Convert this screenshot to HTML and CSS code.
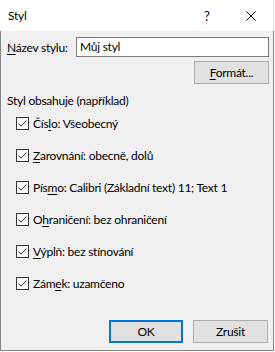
FILE: index.html
```html
<!DOCTYPE html>
<html lang="cs">
<head>
<meta charset="utf-8">
<title>Styl</title>
<link rel="stylesheet" href="styles.css">
</head>
<body>
<div class="dialog">
  <div class="titlebar">
    <span class="title">Styl</span>
    <span class="help">?</span>
    <span class="close">
      <svg width="10" height="10" viewBox="0 0 10 10"><path d="M0.5 0.5 L9.5 9.5 M9.5 0.5 L0.5 9.5" stroke="#000" stroke-width="1" fill="none"/></svg>
    </span>
  </div>
  <div class="body">
    <div class="name-row">
      <span class="name-label"><u>N</u>ázev stylu:</span>
      <div class="input">Můj styl</div>
    </div>
    <div class="format-row"><button class="btn"><u>F</u>ormát...</button></div>
    <div class="group-title">Styl obsahuje (například)</div>
    <ul class="checks">
      <li><span class="cb"><svg width="11" height="11" viewBox="0 0 11 11"><path d="M1.5 5.5 L4 8 L9.5 2.5" stroke="#333" stroke-width="1" fill="none"/></svg></span><span class="lbl">Čís<u>l</u>o: Všeobecný</span></li>
      <li><span class="cb"><svg width="11" height="11" viewBox="0 0 11 11"><path d="M1.5 5.5 L4 8 L9.5 2.5" stroke="#333" stroke-width="1" fill="none"/></svg></span><span class="lbl"><u>Z</u>arovnání: obecně, dolů</span></li>
      <li><span class="cb"><svg width="11" height="11" viewBox="0 0 11 11"><path d="M1.5 5.5 L4 8 L9.5 2.5" stroke="#333" stroke-width="1" fill="none"/></svg></span><span class="lbl">Pís<u>m</u>o: Calibri (Základní text) 11; Text 1</span></li>
      <li><span class="cb"><svg width="11" height="11" viewBox="0 0 11 11"><path d="M1.5 5.5 L4 8 L9.5 2.5" stroke="#333" stroke-width="1" fill="none"/></svg></span><span class="lbl">O<u>h</u>raničení: bez ohraničení</span></li>
      <li><span class="cb"><svg width="11" height="11" viewBox="0 0 11 11"><path d="M1.5 5.5 L4 8 L9.5 2.5" stroke="#333" stroke-width="1" fill="none"/></svg></span><span class="lbl"><u>V</u>ýplň: bez stínování</span></li>
      <li><span class="cb"><svg width="11" height="11" viewBox="0 0 11 11"><path d="M1.5 5.5 L4 8 L9.5 2.5" stroke="#333" stroke-width="1" fill="none"/></svg></span><span class="lbl">Zám<u>e</u>k: uzamčeno</span></li>
    </ul>
    <div class="footer">
      <button class="btn ok">OK</button>
      <button class="btn cancel">Zrušit</button>
    </div>
  </div>
</div>
</body>
</html>
```
FILE: styles.css
```css
* { box-sizing: border-box; }
html, body { margin: 0; padding: 0; }
body {
  width: 275px;
  height: 352px;
  background: #fff;
  font-family: Lato, "Liberation Sans", sans-serif;
  font-size: 12px;
  letter-spacing: -0.25px;
  color: #000;
  overflow: hidden;
}
.dialog {
  width: 274px;
  height: 351px;
  display: flex;
  flex-direction: column;
}
.titlebar {
  height: 31px;
  flex: none;
  background: #fff;
  display: flex;
  align-items: center;
  padding-left: 8px;
  border-right: 1px solid #e6e6e6;
}
.title { flex: 1; line-height: 16px; }
.help { width: 6px; line-height: 16px; font-size: 13px; }
.close { display: flex; margin-left: 36px; margin-right: 17px; }
.body {
  flex: 1;
  background: #f0f0f0;
  border: 1px solid #858585;
  border-top: 0;
  padding: 6px 4px 7px 6px;
  display: flex;
  flex-direction: column;
}
u { text-decoration: underline; text-underline-offset: 2px; }
.name-row { display: flex; align-items: center; height: 20px; }
.name-label { width: 69px; }
.input {
  width: 193px;
  height: 20px;
  background: #fff;
  border: 1px solid #7a7a7a;
  padding-left: 3px;
  line-height: 18px;
}
.format-row { display: flex; justify-content: flex-end; margin-top: 4px; }
.btn {
  font: inherit;
  letter-spacing: inherit;
  color: #000;
  width: 75px;
  height: 23px;
  background: #e1e1e1;
  border: 1px solid #adadad;
  padding: 0;
  margin: 0;
  line-height: 21px;
  text-align: center;
}
.group-title { margin-top: 9px; line-height: 16px; }
.checks {
  list-style: none;
  margin: 8px 0 0 0;
  padding: 0 0 0 9px;
  display: flex;
  flex-direction: column;
  gap: 19px;
}
.checks li { display: flex; align-items: center; height: 13px; }
.cb {
  width: 13px;
  height: 13px;
  border: 1px solid #333;
  background: #fff;
  display: flex;
  margin-right: 4px;
}
.lbl { line-height: 13px; white-space: nowrap; }
.footer {
  margin-top: auto;
  display: flex;
  justify-content: flex-end;
  gap: 10px;
  padding-right: 1px;
}
.btn.ok { width: 74px; border: 2px solid #0078d7; line-height: 19px; }
```
